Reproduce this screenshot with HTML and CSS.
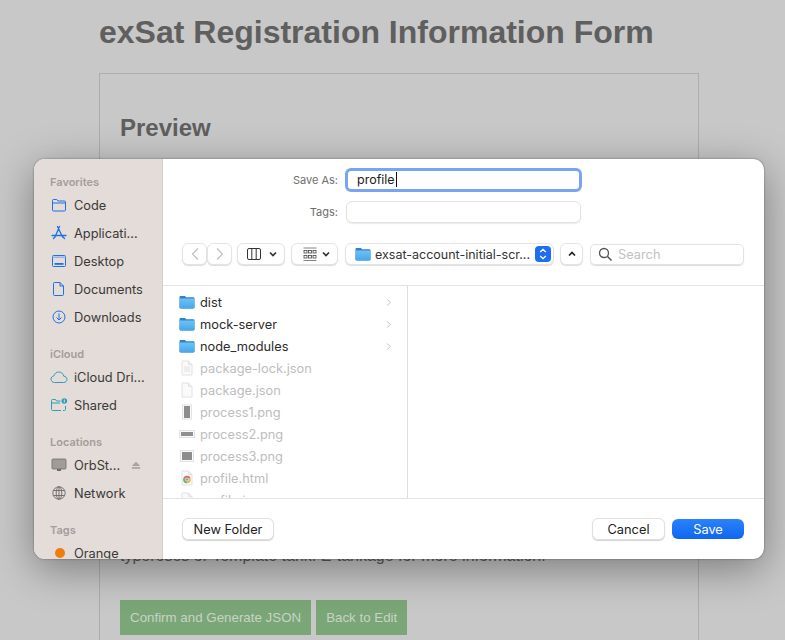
FILE: index.html
```html
<!DOCTYPE html>
<html lang="en">
<head>
<meta charset="utf-8">
<title>exSat Registration Information Form</title>
<link rel="stylesheet" href="styles.css">
</head>
<body>
<svg class="defs" width="0" height="0" aria-hidden="true">
  <defs>
    <linearGradient id="fg" x1="0" y1="0" x2="0" y2="1"><stop offset="0" stop-color="#6cc3f5"/><stop offset="1" stop-color="#4aa6ea"/></linearGradient>
    <symbol id="folder" viewBox="0 0 16 16">
      <path d="M.5 3.200C.5 2.500 1 2 1.700 2h3.800c.5 0 .8.200 1.100.6l.5.7h7.200c.7 0 1.200.5 1.200 1.200v8.800c0 .7-.5 1.200-1.200 1.200H1.700C1 14.500.5 14 .5 13.300z" fill="#2f82c9"/>
      <path d="M.5 5.200c0-.4.3-.7.700-.7h13.600c.4 0 .7.300.7.700v8.100c0 .7-.5 1.200-1.200 1.200H1.700C1 14.500.5 14 .5 13.300z" fill="url(#fg)"/>
    </symbol>
    <symbol id="doc" viewBox="0 0 16 16">
      <path d="M3 1h6.500L13 4.500V15H3z" fill="#fafafa" stroke="#e2e2e2"/>
      <path d="M9.500 1v3.500H13" fill="#eee" stroke="#e2e2e2"/>
    </symbol>
    <symbol id="chev" viewBox="0 0 8 10">
      <path d="M2.500 1.500 6 5 2.500 8.500" fill="none" stroke="#bcbcbc" stroke-width="1.100"/>
    </symbol>
    <symbol id="down" viewBox="0 0 10 8">
      <path d="M2 2.500 5 5.500 8 2.500" fill="none" stroke="#333" stroke-width="1.700"/>
    </symbol>
  </defs>
</svg>

<main class="page">
  <h1 class="title">exSat Registration Information Form</h1>
  <section class="card">
    <h2 class="card-title">Preview</h2>
    <p class="card-note">typeroses or Template tank. E-tankage for more information.</p>
    <div class="actions">
      <button class="green">Confirm and Generate JSON</button>
      <button class="green">Back to Edit</button>
    </div>
  </section>
</main>

<div class="dialog">
  <aside class="sidebar">
    <div class="side-head first">Favorites</div>
    <div class="side-item">
      <svg class="side-icon" viewBox="0 0 16 16"><path d="M1.500 13V3.500c0-.6.400-1 1-1h3.300l1.200 1.500h6.500c.6 0 1 .4 1 1V13c0 .6-.4 1-1 1h-11c-.6 0-1-.4-1-1zM1.500 6h13" fill="none" stroke="#1f6fe5" stroke-width="1"/></svg>
      <span>Code</span>
    </div>
    <div class="side-item">
      <svg class="side-icon" viewBox="0 0 16 16"><path d="M8.500 1.500 4 12M6.500 1.500 11.500 12M1 10.500h14M2.500 13.500l1.500-1.500M13.500 13.500 12 12" fill="none" stroke="#1f6fe5" stroke-width="1.300" stroke-linecap="round"/></svg>
      <span>Applicati...</span>
    </div>
    <div class="side-item">
      <svg class="side-icon" viewBox="0 0 16 16"><rect x="1.500" y="2.500" width="13" height="11" rx="1" fill="none" stroke="#1f6fe5"/><path d="M1.500 3.500h13v1.500h-13z" fill="#8eb5f0"/><rect x="3.500" y="10" width="9" height="1.800" fill="#1f6fe5"/></svg>
      <span>Desktop</span>
    </div>
    <div class="side-item">
      <svg class="side-icon" viewBox="0 0 16 16"><path d="M3.500 1.500h5.500L12.500 5v8.500c0 .6-.4 1-1 1h-8c-.6 0-1-.4-1-1V2.500c0-.6.400-1 1-1zM9 1.500V5h3.500" fill="none" stroke="#1f6fe5"/></svg>
      <span>Documents</span>
    </div>
    <div class="side-item">
      <svg class="side-icon" viewBox="0 0 16 16"><circle cx="8" cy="8" r="6" fill="none" stroke="#1f6fe5"/><path d="M8 4.500v6.500M5.500 8.500 8 11l2.500-2.500" fill="none" stroke="#1f6fe5"/></svg>
      <span>Downloads</span>
    </div>

    <div class="side-head">iCloud</div>
    <div class="side-item">
      <svg class="side-icon wide" viewBox="0 0 18 16"><path d="M4.500 13.500C2.500 13.500 1 12 1 10.200 1 8.500 2.200 7.300 3.800 7 4.500 4.500 6.500 3 8.800 3c2.600 0 4.700 1.800 5 4.200 1.800.2 3.200 1.400 3.200 3.100 0 1.800-1.500 3.200-3.300 3.200z" fill="none" stroke="#2f9db8"/></svg>
      <span>iCloud Dri...</span>
    </div>
    <div class="side-item">
      <svg class="side-icon wide" viewBox="0 0 18 16"><path d="M11 13.500H2.500c-.6 0-1-.4-1-1V3.500c0-.6.400-1 1-1h3l1 1.500h4M1.500 6H10M15.500 9v3.500c0 .6-.4 1-1 1H13" fill="none" stroke="#2f9db8"/><circle cx="14.300" cy="4" r="2.800" fill="#2f9db8"/><rect x="13.800" y="2.500" width="1" height="3" fill="#e3dcd9"/></svg>
      <span>Shared</span>
    </div>

    <div class="side-head">Locations</div>
    <div class="side-item">
      <svg class="side-icon" viewBox="0 0 16 16"><rect x="1" y="2" width="14" height="10" rx="1" fill="#a09c9a" stroke="#6f6c6b" stroke-width=".8"/><rect x="6" y="12" width="4" height="2" fill="#6f6c6b"/></svg>
      <span class="side-grow">OrbSt...</span>
      <svg class="eject" viewBox="0 0 12 10"><path d="M6 .5 11 5.500H1z" fill="#a8a3a1"/><rect x="1" y="7" width="10" height="2" fill="#a8a3a1"/></svg>
    </div>
    <div class="side-item">
      <svg class="side-icon" viewBox="0 0 16 16"><g fill="none" stroke="#6b6867" stroke-width=".9"><circle cx="8" cy="8" r="6.200"/><ellipse cx="8" cy="8" rx="2.800" ry="6.200"/><path d="M2.300 5.500h11.400M2.300 10.500h11.400M8 1.800v12.400"/></g></svg>
      <span>Network</span>
    </div>

    <div class="side-head">Tags</div>
    <div class="side-item">
      <span class="tag-dot"></span>
      <span>Orange</span>
    </div>
  </aside>

  <div class="main">
    <div class="form">
      <div class="field-row">
        <label class="field-label">Save As:</label>
        <div class="field focus">profile<span class="caret"></span></div>
      </div>
      <div class="field-row">
        <label class="field-label">Tags:</label>
        <div class="field"></div>
      </div>
      <div class="toolbar">
        <div class="nav-pair">
          <div class="tb nav"><svg width="10" height="14" viewBox="0 0 10 14"><path d="M8 1.500 2.500 7 8 12.500" fill="none" stroke="#bdbdbd" stroke-width="1.100"/></svg></div>
          <div class="tb nav"><svg width="10" height="14" viewBox="0 0 10 14"><path d="M2 1.500 7.500 7 2 12.500" fill="none" stroke="#bdbdbd" stroke-width="1.100"/></svg></div>
        </div>
        <div class="tb view">
          <svg width="14" height="12" viewBox="0 0 14 12"><rect x=".5" y=".5" width="13" height="11" rx="1.500" fill="none" stroke="#333"/><path d="M4.800 .5v11M9.200 .5v11" stroke="#333"/></svg>
          <svg class="down" viewBox="0 0 10 8"><use href="#down"/></svg>
        </div>
        <div class="tb group">
          <svg width="14" height="14" viewBox="0 0 14 14"><path d="M.5 1h13M.5 13.500h13" stroke="#666" stroke-width=".8"/><g fill="none" stroke="#444" stroke-width=".8"><rect x="1" y="3.500" width="3" height="2.500"/><rect x="5.500" y="3.500" width="3" height="2.500"/><rect x="10" y="3.500" width="3" height="2.500"/><rect x="1" y="8.500" width="3" height="2.500"/><rect x="5.500" y="8.500" width="3" height="2.500"/><rect x="10" y="8.500" width="3" height="2.500"/></g></svg>
          <svg class="down" viewBox="0 0 10 8"><use href="#down"/></svg>
        </div>
        <div class="tb path">
          <svg class="row-icon" viewBox="0 0 16 16"><use href="#folder"/></svg>
          <span class="path-name">exsat-account-initial-scr...</span>
          <span class="stepper"><svg width="10" height="14" viewBox="0 0 10 14"><path d="M2.200 5 5 2.300 7.800 5M2.200 9 5 11.700 7.800 9" fill="none" stroke="#fff" stroke-width="1.300"/></svg></span>
        </div>
        <div class="tb up"><svg width="10" height="8" viewBox="0 0 10 8"><path d="M2 5.500 5 2.500 8 5.500" fill="none" stroke="#222" stroke-width="1.700"/></svg></div>
        <div class="search">
          <svg width="15" height="15" viewBox="0 0 15 15"><circle cx="6" cy="6" r="4.500" fill="none" stroke="#555" stroke-width="1.300"/><path d="M9.500 9.500 13.500 13.500" stroke="#555" stroke-width="1.600"/></svg>
          <span>Search</span>
        </div>
      </div>
    </div>

    <div class="browser">
      <div class="column">
        <div class="row"><svg class="row-icon" viewBox="0 0 16 16"><use href="#folder"/></svg><span class="row-name">dist</span><svg class="row-chev" viewBox="0 0 8 10"><use href="#chev"/></svg></div>
        <div class="row"><svg class="row-icon" viewBox="0 0 16 16"><use href="#folder"/></svg><span class="row-name">mock-server</span><svg class="row-chev" viewBox="0 0 8 10"><use href="#chev"/></svg></div>
        <div class="row"><svg class="row-icon" viewBox="0 0 16 16"><use href="#folder"/></svg><span class="row-name">node_modules</span><svg class="row-chev" viewBox="0 0 8 10"><use href="#chev"/></svg></div>
        <div class="row off"><svg class="row-icon" viewBox="0 0 16 16"><use href="#doc"/><path d="M5 7h6M5 9h6M5 11h6" stroke="#e2e2e2"/></svg><span class="row-name">package-lock.json</span></div>
        <div class="row off"><svg class="row-icon" viewBox="0 0 16 16"><use href="#doc"/></svg><span class="row-name">package.json</span></div>
        <div class="row off"><svg class="row-icon" viewBox="0 0 16 16"><rect x="3.500" y="1" width="9" height="14" fill="#fafafa" stroke="#e2e2e2"/><rect x="5" y="2" width="6" height="12" fill="#8d8d8d"/></svg><span class="row-name">process1.png</span></div>
        <div class="row off"><svg class="row-icon" viewBox="0 0 16 16"><rect x=".5" y="4.500" width="15" height="7" fill="#fafafa" stroke="#e2e2e2"/><rect x="2" y="6" width="12" height="4" fill="#909090"/></svg><span class="row-name">process2.png</span></div>
        <div class="row off"><svg class="row-icon" viewBox="0 0 16 16"><rect x="1.500" y="2.500" width="13" height="11" fill="#fafafa" stroke="#e2e2e2"/><rect x="3" y="4" width="10" height="8" fill="#8d8d8d"/></svg><span class="row-name">process3.png</span></div>
        <div class="row off"><svg class="row-icon" viewBox="0 0 16 16"><use href="#doc"/><circle cx="8" cy="9.500" r="3.800" fill="#e9b949"/><path d="M8 9.500 11.300 7.600A3.800 3.800 0 0 0 4.700 7.600z" fill="#e0695c"/><path d="M8 9.500 4.700 7.600A3.800 3.800 0 0 0 8 13.300z" fill="#6fb07a"/><circle cx="8" cy="9.500" r="1.600" fill="#6f9fe0" stroke="#fff" stroke-width=".6"/></svg><span class="row-name">profile.html</span></div>
        <div class="row off"><svg class="row-icon" viewBox="0 0 16 16"><use href="#doc"/></svg><span class="row-name">profile.js</span></div>
      </div>
      <div class="preview"></div>
    </div>

    <div class="footer">
      <button class="btn">New Folder</button>
      <div class="footer-right">
        <button class="btn cancel">Cancel</button>
        <button class="btn save">Save</button>
      </div>
    </div>
  </div>
</div>
</body>
</html>
```

FILE: styles.css
```css
* { box-sizing: border-box; }
html, body { margin: 0; height: 100%; }
body {
  position: relative;
  width: 785px;
  height: 640px;
  overflow: hidden;
  background: #c8c8c8;
  font-family: "Liberation Sans", Arial, sans-serif;
  color: #5e5e5e;
}
.defs { position: absolute; }
.page { padding: 14px 0 0 99px; width: 699px; }
.title {
  margin: 0 0 22px;
  font-size: 32px;
  line-height: 37px;
  font-weight: 700;
  color: #5f5f5f;
  white-space: nowrap;
}
.card {
  width: 600px;
  height: 700px;
  padding: 40px 20px 0;
  border: 1px solid #adadad;
}
.card-title {
  margin: 0;
  font-size: 24px;
  line-height: 28px;
  font-weight: 700;
  color: #5f5f5f;
}
.card-note {
  margin: 405px 0 0;
  font-size: 16px;
  line-height: 18px;
  white-space: nowrap;
}
.actions { display: flex; gap: 5px; margin-top: 35px; }
.green {
  height: 35px;
  padding: 0 10px;
  border: 0;
  background: #7ba677;
  color: #c8d3c6;
  font: 13.333px "Liberation Sans", Arial, sans-serif;
}

.dialog {
  position: absolute;
  left: 34px;
  top: 159px;
  width: 730px;
  height: 400px;
  display: flex;
  overflow: hidden;
  border-radius: 11px;
  background: #fff;
  font-family: Inter, "Liberation Sans", sans-serif;
  font-size: 12.800px;
  color: #2b2b2b;
  box-shadow: 0 10px 42px rgba(0,0,0,.38), 0 0 2px rgba(0,0,0,.45);
}
.sidebar {
  flex: 0 0 129px;
  height: 400px;
  overflow: hidden;
  padding-left: 16px;
  background: #e3dcd9;
  border-right: 1px solid #d5cfcc;
}
.side-head {
  margin-top: 14px;
  height: 18px;
  line-height: 18px;
  font-size: 11px;
  font-weight: 600;
  color: #a39d9b;
}
.side-item {
  display: flex;
  align-items: center;
  height: 28px;
  color: #3b3937;
}
.side-icon { flex: none; width: 16px; height: 16px; margin: 0 7px 0 1px; }
.side-icon.wide { width: 18px; margin: 0 6px 0 0; }
.side-grow { flex: 1; }
.eject { width: 10px; height: 9px; margin-right: 21px; }
.tag-dot {
  width: 10px;
  height: 10px;
  margin: 0 9px 0 5px;
  border-radius: 50%;
  background: #ef7d0e;
}

.main { flex: 1; min-width: 0; display: flex; flex-direction: column; }
.form { flex: 0 0 127px; border-bottom: 1px solid #e3e3e3; padding-top: 10px; }
.field-row { display: flex; align-items: center; height: 22px; margin-bottom: 10px; }
.field-label {
  width: 175px;
  text-align: right;
  font-size: 11px;
  color: #6e6e6e;
}
.field {
  width: 235px;
  height: 22px;
  margin-left: 8px;
  padding-left: 11px;
  line-height: 20px;
  border-radius: 6px;
  background: #fff;
  border: 1px solid #e2e2e2;
  box-shadow: 0 1px 1px rgba(0,0,0,.08);
}
.field.focus {
  flex: none;
  width: 237px;
  height: 24px;
  margin: 0 -1px 0 7px;
  line-height: 18px;
  padding-left: 9px;
  border: 3px solid #7aa4f3;
  box-shadow: none;
  color: #222;
  font-size: 12.500px;
}
.caret {
  display: inline-block;
  width: 1px;
  height: 15px;
  margin-left: 1px;
  vertical-align: -3px;
  background: #111;
}
.toolbar {
  display: flex;
  align-items: center;
  height: 22px;
  margin-top: 20px;
  padding-left: 19px;
}
.nav-pair { display: flex; margin-right: 5px; }
.tb {
  display: flex;
  align-items: center;
  justify-content: center;
  height: 22px;
  border-radius: 6px;
  background: #fff;
  border: 1px solid #e4e4e4;
  box-shadow: 0 1px 1px rgba(0,0,0,.14);
}
.nav { width: 25px; }
.view { width: 48px; gap: 7px; padding-left: 3px; margin-right: 6px; }
.group { width: 47px; gap: 4px; padding-left: 4px; margin-right: 7px; }
.down { width: 10px; height: 8px; }
.path {
  width: 209px;
  justify-content: flex-start;
  padding: 0 2px 0 9px;
  margin-right: 6px;
  font-size: 12.500px;
}
.path-name { flex: 1; margin-left: 4px; color: #333; white-space: nowrap; }
.stepper {
  display: flex;
  align-items: center;
  justify-content: center;
  width: 16px;
  height: 16px;
  border-radius: 4px;
  background: #1e6ff0;
}
.up { width: 23px; margin-right: 7px; }
.search {
  display: flex;
  align-items: center;
  gap: 5px;
  width: 154px;
  height: 21px;
  padding-left: 7px;
  border-radius: 5px;
  border: 1px solid #e2e2e2;
  box-shadow: 0 1px 1px rgba(0,0,0,.14);
  color: #c2c2c2;
}

.browser { flex: 0 0 213px; height: 213px; display: flex; overflow: hidden; border-bottom: 1px solid #e3e3e3; }
.column {
  flex: 0 0 245px;
  height: 212px;
  overflow: hidden;
  padding: 5px 0 0 16px;
  border-right: 1px solid #dedede;
}
.preview { flex: 1; }
.row { display: flex; align-items: center; height: 22px; color: #2b2b2b; }
.row.off { color: #bdbdbd; }
.row-icon { flex: none; width: 16px; height: 16px; }
.row-name { flex: 1; margin-left: 5px; white-space: nowrap; }
.row-chev { width: 7px; height: 9px; margin-right: 15px; }

.footer {
  flex: 1;
  display: flex;
  align-items: center;
  justify-content: space-between;
  padding: 0 20px 0 19px;
}
.footer-right { display: flex; align-items: center; gap: 7px; }
.btn {
  width: 92px;
  height: 22px;
  padding: 0;
  border-radius: 6px;
  border: 1px solid #e0e0e0;
  background: #fff;
  color: #222;
  box-shadow: 0 1px 1px rgba(0,0,0,.18);
  font: 12.800px Inter, "Liberation Sans", sans-serif;
}
.cancel { width: 73px; }
.save {
  width: 72px;
  height: 20px;
  border: 0;
  color: #fff;
  box-shadow: none;
  background: linear-gradient(#2a82fb, #0f66f0);
}
```
